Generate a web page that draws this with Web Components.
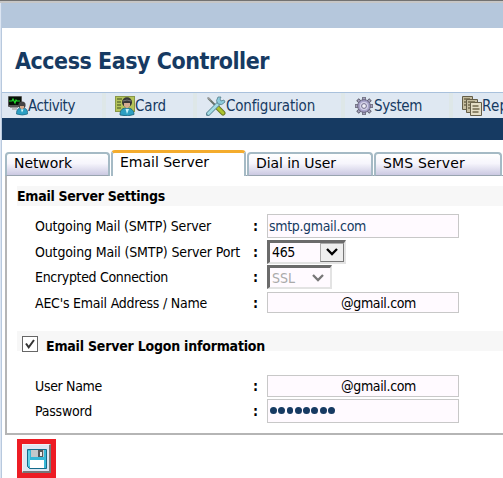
<!DOCTYPE html>
<html lang="en"><head><meta charset="utf-8"><title>Access Easy Controller</title>
<style>body{margin:0;overflow:hidden;background:#fff}</style></head>
<body><access-app></access-app>
<script>
const make=(name,html,ready)=>customElements.define(name,class extends HTMLElement{
  constructor(){super();this.attachShadow({mode:'open'}).innerHTML=html;}
  connectedCallback(){if(ready)ready.call(this,this.shadowRoot);}
});

/* Text tracked to a given width in pixels. */
make('fit-text','<style>:host{display:block;white-space:pre;flex:none}span{display:inline-block}</style><span><slot></slot></span>',function(r){
  const s=r.querySelector('span'),w=+this.getAttribute('w');
  const n=this.textContent.length;
  s.style.letterSpacing=(w-s.getBoundingClientRect().width)/n+'px';
});

const icons={
activity:`<rect x="0" y="0" width="14" height="11" rx="1" fill="#555"/><rect x="1" y="1" width="12" height="8" fill="#061006"/><path d="M1 5h3l1-2 2 4 1-3 1 1h3" fill="none" stroke="#1fe02a" stroke-width="1.2"/><path d="M2 11h8v1H2z" fill="#999"/><path d="M4 12h5v2H4z" fill="#bbb"/><path d="M8.500 18c0-5 2-6 5.500-6s6 1 5.500 6q-5 2-11 0z" fill="#2b9fc4" stroke="#17607d" stroke-width=".7"/><circle cx="14" cy="9" r="3.600" fill="#444"/><path d="M12 10h4v2l-2 1.500-2-1.500z" fill="#d4a989"/><path d="M13 13.500l1 3 1.500-3z" fill="#dff"/>`,
card:`<rect x=".5" y=".5" width="19" height="15" fill="#b5c45a" stroke="#889848"/><path d="M2 3h5M2 6h4M2 9h4M2 12h4" stroke="#657536" stroke-width="1.400"/><path d="M5 19c0-6 3-7 7-7s7 2 7 6.500q-6 2.500-14 .5z" fill="#2c9fc1" stroke="#195e77" stroke-width=".8"/><circle cx="12" cy="6.300" r="5" fill="#373737"/><path d="M9 7h6v3l-3 2.500L9 10z" fill="#d4ab90"/><path d="M8 5q4-2 8 0" stroke="#777" fill="none"/><path d="M10.500 13l1.500 5 2-5z" fill="#c5f4fb"/>`,
configuration:`<path d="M2 2l8 8" stroke="#65716b" stroke-width="2"/><path d="M1 1l3 1 1 3-3-2z" fill="#999"/><path d="M11 11l6 6" stroke="#6c7926" stroke-width="5" stroke-linecap="round"/><path d="M11 11l6 6" stroke="#acc42d" stroke-width="3" stroke-linecap="round"/><path d="M2 18L13 7" stroke="#5b8796" stroke-width="4.500" stroke-linecap="round"/><path d="M2.500 17.500L13 7" stroke="#a4dce5" stroke-width="2.800" stroke-linecap="round"/><path d="M12 1q-3 4 0 7 4 2 7-2l-1-2-3 1-1-2 1-2z" fill="#8ecbdc" stroke="#557d8b" stroke-width=".8"/>`,
system:`<g stroke="#555464" stroke-width="3.500"><path d="M10 1v18M1 10h18M3.500 3.500l13 13M3.500 16.500l13-13"/></g><g stroke="#a5a2bd" stroke-width="2"><path d="M10 1.500v17M1.500 10h17M4 4l12 12M4 16L16 4"/></g><circle cx="10" cy="10" r="6.300" fill="#a9a4ca" stroke="#66627d"/><circle cx="10" cy="10" r="4" fill="#d7d4e9"/><circle cx="10" cy="10" r="2.400" fill="#f0eff7" stroke="#716c8c"/>`,
report:`<g fill="#c5bda0" stroke="#645e49"><path d="M.5.500h10v13H.500z"/><path d="M4.500 3.500h11v13h-11z"/><path d="M8.500 6.500h11v13h-11z" fill="#e4dec6"/></g><path d="M2 3h6M2 6h2M2 9h2M6 6h7M6 9h2M6 12h2M10.500 10h6M10.500 13h7M10.500 16h6" stroke="#71694e" stroke-width="1.300"/>`,
save:`<path d="M.5.500h19v19H2.500l-2-2z" fill="#37b7d7" stroke="#146b8b"/><path d="M4 1h13v7H4z" fill="#c3c8cb"/><path d="M11 1h5v7h-5z" fill="#54575a"/><path d="M13 3h2v4h-2z" fill="#eee"/><path d="M3 11h14v8H3z" fill="#fff"/><path d="M2 2v15" stroke="#8ceaf7"/>`};
make('app-icon','<style>:host{display:block;width:20px;height:20px;flex:none}svg{display:block}</style><svg width="20" height="20" viewBox="0 0 20 20"></svg>',function(r){r.querySelector('svg').innerHTML=icons[this.getAttribute('name')];});

make('nav-item','',function(r){
  const a=n=>this.getAttribute(n);
  r.innerHTML=`<style>:host{display:flex;height:25px;flex:none;box-sizing:border-box;padding-top:3px;width:${a('span')}px;background:linear-gradient(#dee7e8,#dee7e8) right 9px top/4px 25px no-repeat}fit-text{font-size:15px;line-height:21px;color:#163a62}</style><app-icon name="${a('icon')}"></app-icon><fit-text w="${a('w')}">${a('label')}</fit-text>`;
});

make('tab-item',`<style>:host{display:block;box-sizing:border-box;height:24px;margin-top:2px;border:2px solid #a5bac5;border-bottom:1px solid #99a4b0;border-radius:4px 4px 0 0;background:linear-gradient(#fff,#f6f5fc 45%,#cbc9e2);padding-left:7px;color:#000;font:14px/18px "DejaVu Sans",sans-serif;flex:none}
:host([active]){height:26px;margin-top:0;border-top:3px solid #f4ac2d;border-bottom:0;background:#fff;line-height:19px}</style><slot></slot>`);

make('section-bar',`<style>:host{display:flex;align-items:center;height:20px;background:#f7f7f7;font-weight:bold;font-size:14px;color:#000}</style><slot></slot>`);
make('form-row',`<style>:host{display:flex;align-items:center;padding-left:29px;height:var(--h)}.label{width:218px;flex:none}.colon{width:14px;flex:none;font-weight:bold}</style><div class="label"><slot name="label"></slot></div><div class="colon">:</div><slot></slot>`);
make('text-field',`<style>:host{display:flex;align-items:center;box-sizing:border-box;width:192px;height:var(--fh,24px);border:1px solid #c8c8c8;background:#fffaff;padding-left:var(--pl,1px);color:var(--fc,#163a62)}</style><slot></slot>`);
make('select-field',`<style>:host{display:flex;align-items:center;box-sizing:border-box;height:24px;border:2px solid #e3e3e3;border-left:3px solid #6b6b6b;border-top:3px solid #6b6b6b;background:#fffaff;padding-left:2px;color:#000;justify-content:space-between}
.b{display:flex;align-items:center;justify-content:center;box-sizing:border-box;width:24px;height:19px;border:1px solid #777;border-left-color:#aaa;border-top-color:#aaa;background:#eee}:host([disabled]){color:#aaa}:host([disabled]) .b{border:0;background:none}path{stroke:#000}:host([disabled]) path{stroke:#777}</style><slot></slot><div class="b"><svg width="12" height="8" viewBox="0 0 12 8"><path d="M1 1l5 5 5-5" fill="none" stroke-width="2.300"/></svg></div>`);
make('check-box',`<style>:host{display:block;box-sizing:border-box;width:16px;height:16px;border:1px solid #666;background:#fff;flex:none}svg{display:block}</style><svg width="14" height="14"><path d="M3 6.500l2.700 3.800L11 3" fill="none" stroke="#333" stroke-width="2"/></svg>`);
make('password-dots',`<style>:host{display:flex;gap:1.400px;padding-left:1px;margin-top:-1px}i{width:6.900px;height:7px;border-radius:50%;background:#163a62}</style>`+'<i></i>'.repeat(8));
make('save-button',`<style>:host{display:block;box-sizing:border-box;width:39px;height:39px;border:5px solid #ed1c24}div{box-sizing:border-box;width:29px;height:29px;padding:4px;background:#dde6f2;border:1px solid #eef3f8;border-right:2px solid #777;border-bottom:2px solid #777}</style><div><app-icon name="save"></app-icon></div>`);

make('access-app',`<style>
:host{display:block;box-sizing:border-box;width:503px;height:478px;overflow:hidden;font:14px/18px "DejaVu Sans Condensed","DejaVu Sans",sans-serif;font-stretch:condensed;color:#000;background:linear-gradient(90deg,#dce5f2 1px,#b8c9de 1px,#b8c9de 2px,#fff 2px)}
.top{height:1px;background:#727272}.top2{height:2px;background:#c6c6c6}
.band{height:25px;margin-left:2px;background:#b5c7dc}
header{height:64px;box-sizing:border-box;padding:18px 0 0 15px}h1{margin:0;font-size:23px;line-height:30px;color:#163a62}
nav{display:flex;height:26px;box-sizing:border-box;border-top:1px solid #a9c1dc;background:#dfe8f2;margin-left:2px;padding-left:6px;overflow:hidden}
.dark{height:22px;margin-left:2px;background:#163a62}
.tabs{display:flex;padding:10px 0 0 5px;gap:1px;height:36px;box-sizing:border-box;background:linear-gradient(#98a3af,#98a3af) 5px 35px/105px 1px no-repeat,linear-gradient(#98a3af,#98a3af) 246px 35px/257px 1px no-repeat}
main{margin-left:5px;height:259px;box-sizing:border-box;border-left:2px solid #b5b5b5;border-bottom:2px solid #b5b5b5;padding:10px 0 0 10px}
.rows{margin-left:-11px}.rows form-row{padding-left:29px}
</style>
<div class="top"></div><div class="top2"></div><div class="band"></div>
<header><h1><fit-text w="254">Access Easy Controller</fit-text></h1></header>
<nav><nav-item icon="activity" label="Activity" w="47" span="107"></nav-item><nav-item icon="card" label="Card" w="31" span="91"></nav-item><nav-item icon="configuration" label="Configuration" w="89" span="148"></nav-item><nav-item icon="system" label="System" w="48" span="108"></nav-item><nav-item icon="report" label="Report" w="46" span="90"></nav-item></nav>
<div class="dark"></div>
<div class="tabs"><tab-item style="width:105px"><fit-text w="58">Network</fit-text></tab-item><tab-item active style="width:135px"><fit-text w="89">Email Server</fit-text></tab-item><tab-item style="width:126px"><fit-text w="80">Dial in User</fit-text></tab-item><tab-item style="width:128px"><fit-text w="82">SMS Server</fit-text></tab-item></div>
<main>
<section-bar><fit-text w="148">Email Server Settings</fit-text></section-bar>
<div class="rows" style="padding-top:7px">
<form-row style="--h:25px"><fit-text slot="label" w="176">Outgoing Mail (SMTP) Server</fit-text><text-field><fit-text w="97">smtp.gmail.com</fit-text></text-field></form-row>
<form-row style="--h:27px"><fit-text slot="label" w="205">Outgoing Mail (SMTP) Server Port</fit-text><select-field style="width:79px"><fit-text w="23">465</fit-text></select-field></form-row>
<form-row style="--h:24px"><fit-text slot="label" w="133">Encrypted Connection</fit-text><select-field disabled style="width:65px"><fit-text w="23">SSL</fit-text></select-field></form-row>
<form-row style="--h:27px"><fit-text slot="label" w="172">AEC's Email Address / Name</fit-text><text-field style="--fh:21px;--pl:73px;--fc:#000"><fit-text w="75">@gmail.com</fit-text></text-field></form-row>
</div>
<section-bar style="margin-top:15px"><check-box style="margin:6px 8px 0 5px"></check-box><fit-text w="219" style="margin-top:10px">Email Server Logon information</fit-text></section-bar>
<div class="rows" style="padding-top:22px">
<form-row style="--h:26px"><fit-text slot="label" w="67">User Name</fit-text><text-field style="--fh:22px;--pl:73px;--fc:#000"><fit-text w="75">@gmail.com</fit-text></text-field></form-row>
<form-row style="--h:24px"><fit-text slot="label" w="57">Password</fit-text><text-field><password-dots></password-dots></text-field></form-row>
</div>
</main>
<save-button style="margin:4px 0 0 17px"></save-button>`);
</script></body></html>
